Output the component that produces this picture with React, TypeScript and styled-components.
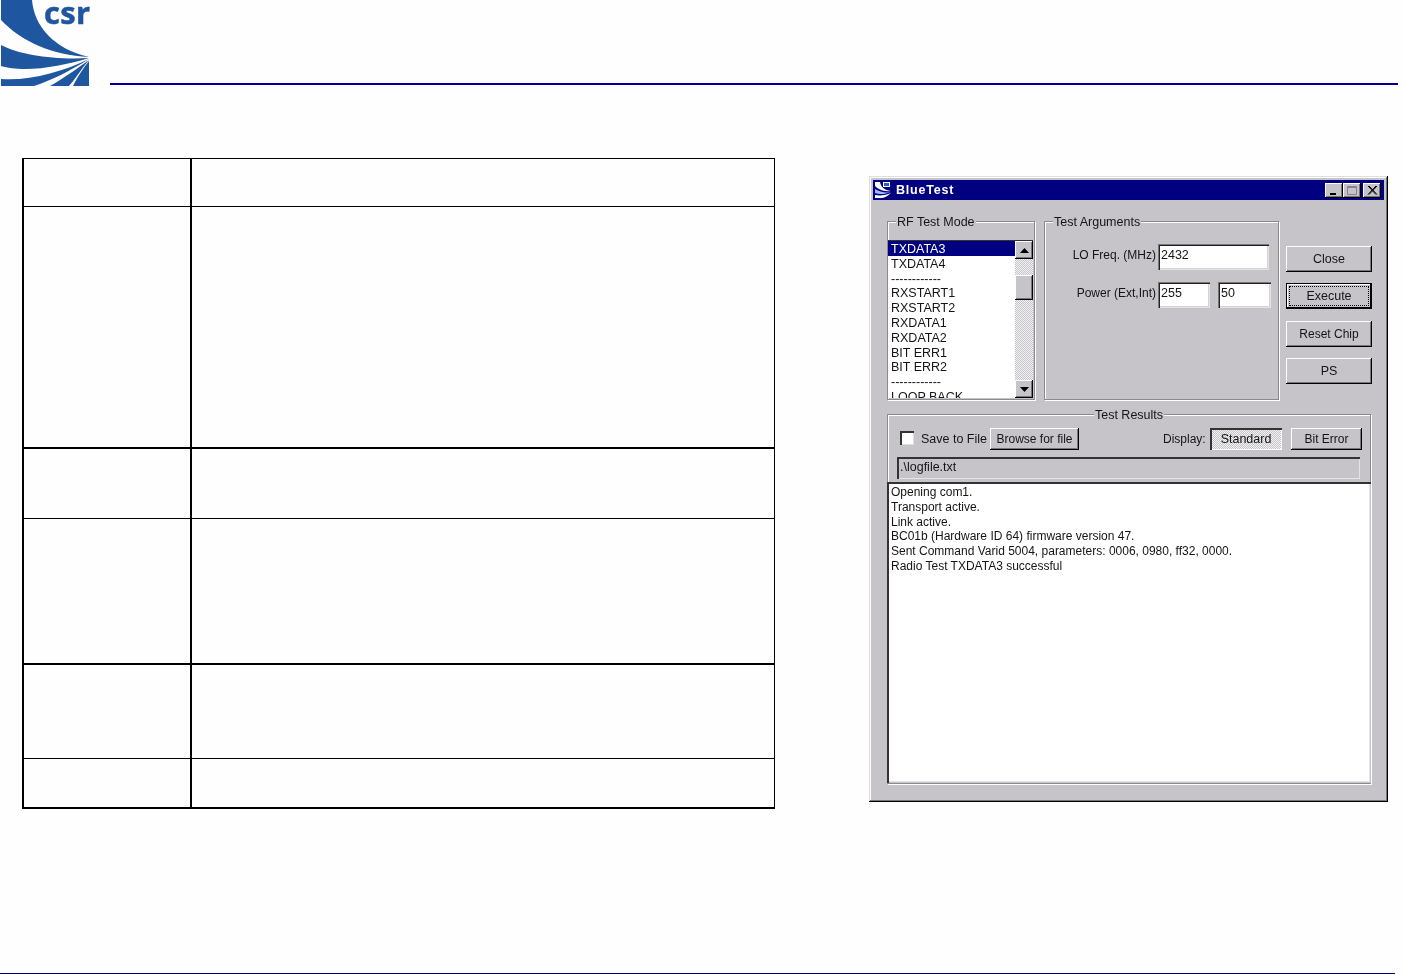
import styled, { createGlobalStyle } from "styled-components";

const rows = [
  { height: 48, thick: false },
  { height: 242, thick: true },
  { height: 70, thick: false },
  { height: 146, thick: true },
  { height: 94, thick: false },
  { height: 50, thick: true },
];

const modes = [
  "TXDATA3",
  "TXDATA4",
  "------------",
  "RXSTART1",
  "RXSTART2",
  "RXDATA1",
  "RXDATA2",
  "BIT ERR1",
  "BIT ERR2",
  "------------",
  "LOOP BACK",
];

const log = [
  "Opening com1.",
  "Transport active.",
  "Link active.",
  "BC01b (Hardware ID 64) firmware version 47.",
  "Sent Command Varid 5004, parameters: 0006, 0980, ff32, 0000.",
  "Radio Test TXDATA3 successful",
];

function CsrLogo() {
  return (
    <LogoSvg width="90" height="86" viewBox="0 0 90 86">
      <g fill="#1f56a0">
        <path d="M1 0H32C34 26 54 49 89 57C52 55 22 42 1 20Z" />
        <path d="M1 45C20 55 55 60 89 58C70 64 45 69 25 69C15 69 8 68 1 66Z" />
        <path d="M1 79C30 81 62 72 89 59C68 72 52 80 34 86H1Z" />
        <path d="M50 86C64 78 78 68 89 60C82 68 76 78 69 86Z" />
        <path d="M73 86C78 76 84 67 89 61V86Z" />
      </g>
      <text
        x="44"
        y="24"
        fontFamily="Open Sans, sans-serif"
        fontWeight="700"
        fontSize="31"
        letterSpacing="0.3"
        fill="#1f56a0"
        stroke="#1f56a0"
        strokeWidth="0.5"
      >
        csr
      </text>
    </LogoSvg>
  );
}

function TitleIcon() {
  return (
    <svg width="18" height="18" viewBox="0 0 18 18">
      <path d="M1 1H6C7 6 10 9 17 10C9 11 4 8 1 5Z" fill="#fff" />
      <path d="M1 8C6 11 11 12 17 11C11 13 6 14 1 12Z" fill="#9cc0ff" />
      <path d="M1 14C7 15 12 14 17 12C14 15 10 17 7 17H1Z" fill="#fff" />
      <path d="M9 1H16V6H9Z" fill="#fff" />
      <path d="M10 2H15V5H10Z" fill="#2c5fc4" />
    </svg>
  );
}

export default function App() {
  return (
    <Page>
      <GlobalStyle />
      <Header>
        <CsrLogo />
        <HeaderRule />
      </Header>
      <Main>
        <DocTable>
          <colgroup>
            <col width="168" />
            <col />
          </colgroup>
          <tbody>
            {rows.map((row, i) => (
              <tr key={i}>
                <LabelCell $height={row.height} $thick={row.thick} />
                <ValueCell $height={row.height} $thick={row.thick} />
              </tr>
            ))}
          </tbody>
        </DocTable>
        <Window>
          <TitleBar>
            <TitleIcon />
            <TitleText>BlueTest</TitleText>
            <TitleButtons>
              <TitleButton aria-label="Minimize">
                <svg width="12" height="11" viewBox="0 0 12 11">
                  <rect x="2" y="8" width="6" height="2" fill="#000" />
                </svg>
              </TitleButton>
              <TitleButton aria-label="Maximize">
                <svg width="12" height="11" viewBox="0 0 12 11">
                  <path d="M1.5 1.5H10.5V9.5H1.5Z M1.5 2.5H10.5" fill="none" stroke="#86848a" />
                </svg>
              </TitleButton>
              <CloseButton aria-label="Close">
                <svg width="12" height="11" viewBox="0 0 12 11">
                  <path d="M2 1L10 9.5M3 1L11 9.5M10 1L2 9.5M11 1L3 9.5" stroke="#000" strokeWidth="1" />
                </svg>
              </CloseButton>
            </TitleButtons>
          </TitleBar>
          <WindowBody>
            <TopRow>
              <ModeGroup>
                <GroupLabel>RF Test Mode</GroupLabel>
                <ListBox>
                  <ListItems>
                    {modes.map((mode, i) => (
                      <ListItem key={i} $selected={i === 0}>
                        {mode}
                      </ListItem>
                    ))}
                  </ListItems>
                  <ScrollBar>
                    <ScrollArrow>
                      <svg width="9" height="5" viewBox="0 0 9 5">
                        <path d="M4.5 0L9 5H0Z" fill="#000" />
                      </svg>
                    </ScrollArrow>
                    <ScrollGap />
                    <ScrollThumb />
                    <ScrollTrack />
                    <ScrollArrow>
                      <svg width="9" height="5" viewBox="0 0 9 5">
                        <path d="M0 0H9L4.5 5Z" fill="#000" />
                      </svg>
                    </ScrollArrow>
                  </ScrollBar>
                </ListBox>
              </ModeGroup>
              <ArgsGroup>
                <GroupLabel>Test Arguments</GroupLabel>
                <ArgRow>
                  <ArgLabel>LO Freq. (MHz)</ArgLabel>
                  <Field $width={111}>2432</Field>
                </ArgRow>
                <ArgRow>
                  <ArgLabel>Power (Ext,Int)</ArgLabel>
                  <Field $width={52}>255</Field>
                  <Field $width={53}>50</Field>
                </ArgRow>
              </ArgsGroup>
              <ActionColumn>
                <ActionButton>Close</ActionButton>
                <DefaultButton>
                  <FocusRing>Execute</FocusRing>
                </DefaultButton>
                <ActionButton $narrow>Reset Chip</ActionButton>
                <ActionButton>PS</ActionButton>
              </ActionColumn>
            </TopRow>
            <ResultsGroup>
              <ResultsLabel>Test Results</ResultsLabel>
              <SaveRow>
                <CheckBox />
                <SaveLabel>Save to File</SaveLabel>
                <BrowseButton>Browse for file</BrowseButton>
                <DisplayLabel>Display:</DisplayLabel>
                <StandardButton>Standard</StandardButton>
                <BitErrorButton>Bit Error</BitErrorButton>
              </SaveRow>
              <PathField>.\logfile.txt</PathField>
              <LogBox>
                {log.map((line) => (
                  <div key={line}>{line}</div>
                ))}
              </LogBox>
            </ResultsGroup>
          </WindowBody>
        </Window>
      </Main>
      <FooterRule />
    </Page>
  );
}

const GlobalStyle = createGlobalStyle`
  html, body {
    margin: 0;
    padding: 0;
    background: #fefefe;
  }
`;

const Page = styled.div`
  width: 1404px;
  height: 974px;
  overflow: hidden;
  display: flex;
  flex-direction: column;
  font-family: "Liberation Sans", Arial, sans-serif;
`;

const Header = styled.header`
  display: flex;
  align-items: flex-start;
  height: 86px;
`;

const LogoSvg = styled.svg`
  flex: none;
  filter: blur(0.4px);
`;

const HeaderRule = styled.div`
  width: 1288px;
  height: 2px;
  margin: 83px 0 0 20px;
  background: #00008e;
`;

const Main = styled.main`
  display: flex;
  align-items: flex-start;
  padding: 72px 0 0 22px;
`;

const DocTable = styled.table`
  width: 753px;
  table-layout: fixed;
  border-collapse: separate;
  border-spacing: 0;
  border-top: 1px solid #000;
  border-left: 2px solid #000;
  border-right: 1px solid #000;
  flex: none;
`;

const LabelCell = styled.td<{ $height: number; $thick: boolean }>`
  box-sizing: border-box;
  height: ${(p) => p.$height}px;
  padding: 0;
  border-right: 2px solid #000;
  border-bottom: ${(p) => (p.$thick ? 2 : 1)}px solid #000;
`;

const ValueCell = styled.td<{ $height: number; $thick: boolean }>`
  box-sizing: border-box;
  height: ${(p) => p.$height}px;
  padding: 0;
  border-bottom: ${(p) => (p.$thick ? 2 : 1)}px solid #000;
`;

const Window = styled.section`
  box-sizing: border-box;
  width: 519px;
  height: 626px;
  margin: 18px 0 0 94px;
  padding: 4px;
  display: flex;
  flex-direction: column;
  flex: none;
  background: #c6c4c8;
  color: #151515;
  font-size: 12.5px;
  filter: blur(0.35px);
  box-shadow: inset -1px -1px #000, inset 1px 1px #dedede, inset -2px -2px #77767a, inset 2px 2px #fff;
`;

const TitleBar = styled.div`
  height: 20px;
  padding: 0 3px 0 1px;
  display: flex;
  align-items: center;
  background: #000080;
  flex: none;
`;

const TitleText = styled.span`
  margin-left: 4px;
  color: #fff;
  font-weight: 700;
  font-size: 12.5px;
  letter-spacing: 0.8px;
`;

const TitleButtons = styled.div`
  margin-left: auto;
  display: flex;
`;

const TitleButton = styled.div`
  width: 18px;
  height: 15px;
  display: flex;
  align-items: center;
  justify-content: center;
  background: #c6c4c8;
  box-shadow: inset -1px -1px #000, inset 1px 1px #fff, inset -2px -2px #77767a;
`;

const CloseButton = styled(TitleButton)`
  margin-left: 2px;
`;

const WindowBody = styled.div`
  flex: 1;
  min-height: 0;
  padding: 21px 12px 14px 14px;
  display: flex;
  flex-direction: column;
`;

const TopRow = styled.div`
  display: flex;
  height: 179px;
  flex: none;
`;

const Group = styled.div`
  position: relative;
  box-sizing: border-box;
  border: 1px solid #8a898d;
  box-shadow: 1px 1px #fff, inset 1px 1px #fff;
`;

const GroupLabel = styled.span`
  position: absolute;
  top: -7px;
  left: 8px;
  padding: 0 1px;
  background: #c6c4c8;
  line-height: 15px;
  white-space: nowrap;
`;

const ModeGroup = styled(Group)`
  width: 148px;
  padding: 18px 0 0 0;
`;

const ListBox = styled.div`
  box-sizing: border-box;
  height: 158px;
  margin-right: 1px;
  padding: 1px 0 0 0;
  display: flex;
  overflow: hidden;
  background: #fff;
  box-shadow: inset 0 2px #333;
`;

const ListItems = styled.div`
  flex: 1;
  min-width: 0;
  overflow: hidden;
`;

const ListItem = styled.div<{ $selected: boolean }>`
  height: 14.8px;
  line-height: 16px;
  padding-left: 3px;
  white-space: nowrap;
  background: ${(p) => (p.$selected ? "#000080" : "transparent")};
  color: ${(p) => (p.$selected ? "#fff" : "#151515")};
`;

const ScrollBar = styled.div`
  width: 18px;
  flex: none;
  display: flex;
  flex-direction: column;
`;

const Raised = `
  background: #c6c4c8;
  box-shadow: inset -1px -1px #000, inset 1px 1px #fff, inset -2px -2px #77767a;
`;

const ScrollArrow = styled.div`
  ${Raised}
  height: 18px;
  flex: none;
  display: flex;
  align-items: center;
  justify-content: center;
`;

const ScrollTrack = styled.div`
  flex: 1;
  background: repeating-conic-gradient(#c6c4c8 0 25%, #f2f2f2 0 50%) 0 0 / 2px 2px;
`;

const ScrollGap = styled(ScrollTrack)`
  flex: none;
  height: 16px;
`;

const ScrollThumb = styled.div`
  ${Raised}
  height: 25px;
  flex: none;
`;

const ArgsGroup = styled(Group)`
  width: 235px;
  margin-left: 9px;
  padding-top: 22px;
  display: flex;
  flex-direction: column;
  gap: 12px;
`;

const ArgRow = styled.div`
  display: flex;
  gap: 8px;
  height: 26px;
`;

const ArgLabel = styled.span`
  box-sizing: border-box;
  width: 112px;
  margin-right: -7px;
  padding: 4px 1px 0 0;
  font-size: 12px;
  text-align: right;
  white-space: nowrap;
  flex: none;
`;

const Field = styled.div<{ $width: number }>`
  box-sizing: border-box;
  width: ${(p) => p.$width}px;
  height: 26px;
  padding: 4px 0 0 3px;
  background: #fff;
  box-shadow: inset 1px 1px #77767a, inset 2px 2px #222, inset -1px -1px #e4e4e4, inset -2px -2px #d4d4d4;
`;

const ActionColumn = styled.div`
  width: 86px;
  margin-left: 7px;
  padding-top: 25px;
  display: flex;
  flex-direction: column;
  gap: 11.3px;
`;

const ButtonFace = styled.div`
  ${Raised}
  box-sizing: border-box;
  display: flex;
  align-items: center;
  justify-content: center;
  white-space: nowrap;
`;

const ActionButton = styled(ButtonFace)<{ $narrow?: boolean }>`
  height: 26px;
  font-size: ${(p) => (p.$narrow ? 12 : 12.5)}px;
`;

const DefaultButton = styled(ActionButton)`
  padding: 4px;
  box-shadow: inset 0 0 0 1px #000, inset -2px -2px #000, inset 2px 2px #fff;
`;

const FocusRing = styled.div`
  flex: 1;
  align-self: stretch;
  display: flex;
  align-items: center;
  justify-content: center;
  outline: 1px dotted #000;
`;

const ResultsGroup = styled(Group)`
  width: 484px;
  margin-top: 14px;
  flex: 1;
  min-height: 0;
  padding-top: 13px;
  display: flex;
  flex-direction: column;
`;

const ResultsLabel = styled(GroupLabel)`
  left: 50%;
  transform: translateX(-50%);
`;

const SaveRow = styled.div`
  height: 22px;
  padding-left: 12px;
  display: flex;
  align-items: center;
  flex: none;
`;

const CheckBox = styled.div`
  box-sizing: border-box;
  width: 14px;
  height: 14px;
  margin-bottom: 2px;
  background: #fff;
  box-shadow: inset 2px 2px #333, inset -1px -1px #dedede;
`;

const SaveLabel = styled.span`
  margin: 0 0 1px 7px;
  width: 69px;
  white-space: nowrap;
`;

const BrowseButton = styled(ButtonFace)`
  width: 89px;
  height: 22px;
  font-size: 12px;
`;

const DisplayLabel = styled.span`
  margin: 0 0 1px 84px;
  width: 47px;
  font-size: 12px;
`;

const StandardButton = styled(ButtonFace)`
  width: 72px;
  height: 22px;
  background: repeating-conic-gradient(#c6c4c8 0 25%, #f2f2f2 0 50%) 0 0 / 2px 2px;
  box-shadow: inset 2px 2px #333, inset -1px -1px #fff;
`;

const BitErrorButton = styled(ButtonFace)`
  width: 71px;
  height: 22px;
  margin-left: 9px;
  font-size: 12px;
`;

const PathField = styled.div`
  box-sizing: border-box;
  width: 463px;
  height: 22px;
  margin: 7px 0 0 9px;
  padding: 3px 0 0 3px;
  flex: none;
  box-shadow: inset 2px 2px #333, inset -1px -1px #e4e4e4;
`;

const LogBox = styled.div`
  box-sizing: border-box;
  flex: none;
  height: 301px;
  width: 484px;
  margin: 3px 0 0 -1px;
  padding: 3px 0 0 4px;
  font-size: 12px;
  line-height: 14.8px;
  background: #fff;
  white-space: nowrap;
  box-shadow: inset 2px 2px #333, inset -1px -1px #c6c4c8, inset -2px -2px #e4e4e4;
`;

const FooterRule = styled.div`
  width: 1395px;
  height: 1px;
  margin-top: auto;
  background: #00006e;
  flex: none;
`;
